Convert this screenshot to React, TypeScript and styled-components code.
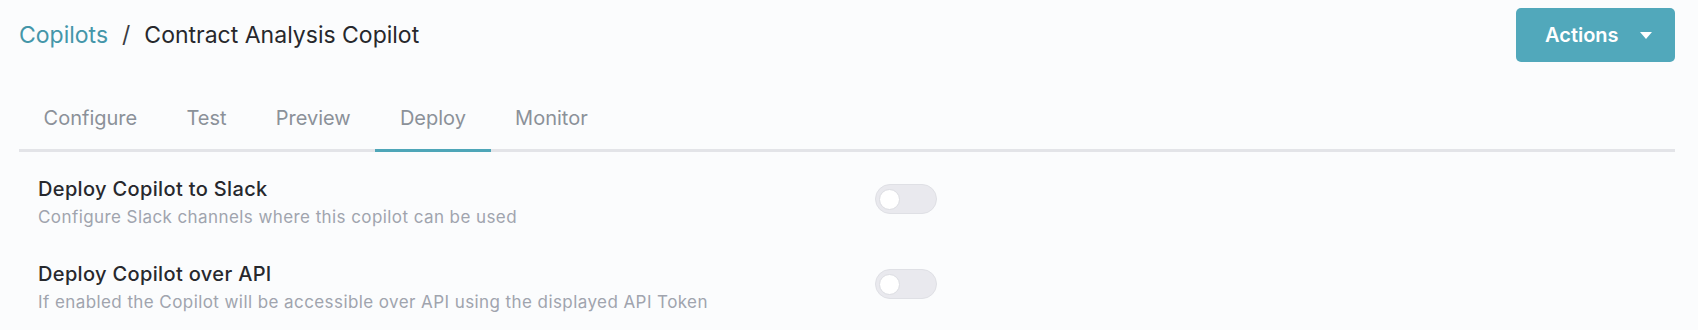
import styled, {createGlobalStyle} from "styled-components";

const GlobalStyle = createGlobalStyle`
  body {
    margin: 0;
    background: #fbfcfd;
    font-family: Inter, "Noto Sans", sans-serif;
    -webkit-font-smoothing: antialiased;
  }
`

const tabs = ["Configure", "Test", "Preview", "Deploy", "Monitor"]

const settings = [
    {title: "Deploy Copilot to Slack", text: "Configure Slack channels where this copilot can be used"},
    {title: "Deploy Copilot over API", text: "If enabled the Copilot will be accessible over API using the displayed API Token"},
]

export default function App() {
    return (
        <>
            <GlobalStyle/>
            <Page>
                <Header>
                    <Breadcrumb>
                        <Crumb href="#">Copilots</Crumb>
                        <Separator>/</Separator>
                        <Current>Contract Analysis Copilot</Current>
                    </Breadcrumb>
                    <ActionsButton type="button">
                        Actions
                        <svg width="12" height="7" viewBox="0 0 12 7">
                            <path d="M0 0h12L6 7z" fill="#fff"/>
                        </svg>
                    </ActionsButton>
                </Header>

                <TabBar>
                    {tabs.map(tab => (
                        <Tab key={tab} $active={tab === "Deploy"}>{tab}</Tab>
                    ))}
                </TabBar>

                <Settings>
                    {settings.map(item => (
                        <SettingRow key={item.title}>
                            <Label>
                                <Title>{item.title}</Title>
                                <Description>{item.text}</Description>
                            </Label>
                            <Toggle type="button" aria-label={item.title}>
                                <Knob/>
                            </Toggle>
                        </SettingRow>
                    ))}
                </Settings>
            </Page>
        </>
    )
}

const Page = styled.main`
  padding: 8px 23px 0 19px;
`

const Header = styled.header`
  display: flex;
  align-items: center;
  justify-content: space-between;
  height: 54px;
`

const Breadcrumb = styled.nav`
  display: flex;
  align-items: center;
  font-size: 23px;
  line-height: 28px;
  color: #27282c;
`

const Crumb = styled.a`
  color: #4496a9;
  text-decoration: none;
`

const Separator = styled.span`
  margin: 0 14px;
  color: #3a3b40;
`

const Current = styled.span`
  color: #27282c;
`

const ActionsButton = styled.button`
  display: flex;
  align-items: center;
  gap: 21px;
  width: 159px;
  height: 54px;
  padding: 0 0 0 29px;
  border: none;
  border-radius: 5px;
  background: #51a8bb;
  color: #fff;
  font-family: inherit;
  font-size: 20px;
  font-weight: 600;
  cursor: pointer;
`

const TabBar = styled.div`
  display: flex;
  margin-top: 22px;
  border-bottom: 3px solid #e3e4e8;
`

const Tab = styled.div<{ $active?: boolean }>`
  padding: 22px 24.6px 19px;
  margin-bottom: -3px;
  font-size: 20px;
  line-height: 24px;
  color: #8b9199;
  border-bottom: 3px solid ${props => props.$active ? "#4ea6b8" : "transparent"};
`

const Settings = styled.section`
  display: flex;
  flex-direction: column;
  gap: 35px;
  padding: 26px 19px 0;
`

const SettingRow = styled.div`
  display: flex;
  align-items: flex-start;
`

const Label = styled.div`
  display: flex;
  flex-direction: column;
  gap: 6px;
  width: 837px;
`

const Title = styled.span`
  font-size: 20px;
  line-height: 22px;
  font-weight: 500;
  letter-spacing: 0.35px;
  color: #27282d;
`

const Description = styled.span`
  font-size: 17px;
  line-height: 22px;
  letter-spacing: 0.42px;
  color: #a0a4ae;
`

const Toggle = styled.button`
  display: flex;
  align-items: center;
  width: 62px;
  height: 30px;
  margin-top: 6px;
  padding: 0 3px;
  border: 1px solid #dfe0e5;
  border-radius: 15px;
  background: #e9e9ee;
  cursor: pointer;
`

const Knob = styled.span`
  width: 21px;
  height: 21px;
  border-radius: 50%;
  background: #fff;
  border: 1px solid #dcdde2;
  box-sizing: border-box;
`
